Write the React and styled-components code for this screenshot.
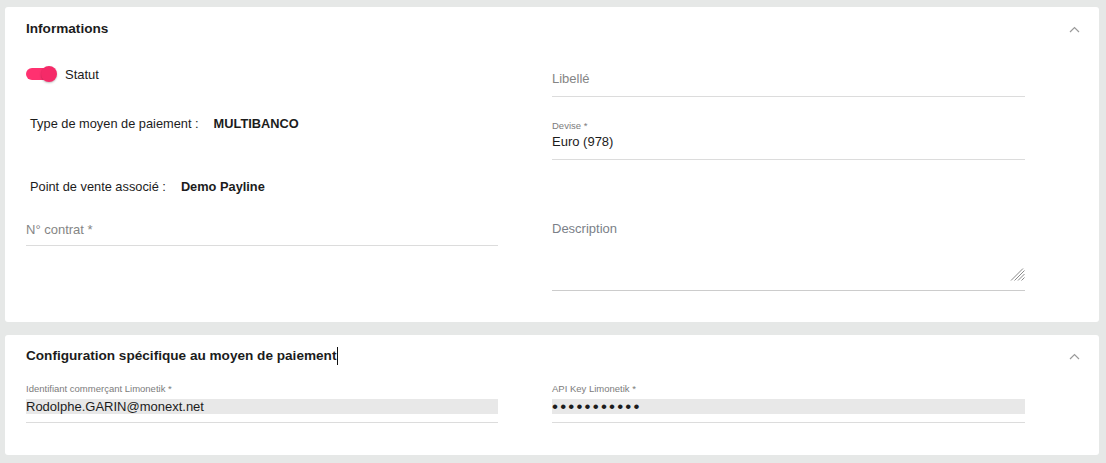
import React from 'react';
import styled, { createGlobalStyle } from 'styled-components';

const GlobalStyle = createGlobalStyle`
    html, body {
        margin: 0;
        padding: 0;
        background: #e6e8e7;
        font-family: "Liberation Sans", Arial, sans-serif;
    }
`;

const Page = styled.div`
    width: 1106px;
    height: 463px;
    box-sizing: border-box;
    padding: 7px 7px 8px 5px;
    display: flex;
    flex-direction: column;
    gap: 13px;
`;

const Card = styled.section`
    background: #fff;
    border-radius: 3px;
    padding: ${p => p.$pad};
`;

const Header = styled.div`
    display: flex;
    justify-content: space-between;
    align-items: center;
    padding-right: 19px;
    height: 16px;
`;

const Title = styled.h3`
    margin: 0;
    font-size: 13.6px;
    line-height: 16px;
    font-weight: bold;
    color: #1c1c1c;
    display: flex;
    align-items: center;
`;

const Caret = styled.span`
    display: inline-block;
    width: 1px;
    height: 18px;
    background: #111;
    margin-left: 1px;
`;

const Grid = styled.div`
    display: grid;
    grid-template-columns: 472px 473px;
    column-gap: 54px;
    margin-top: ${p => p.$top};
    align-items: start;
`;

const Column = styled.div`
    display: flex;
    flex-direction: column;
`;

const ToggleRow = styled.div`
    display: flex;
    align-items: center;
    height: 16px;
    margin-top: ${p => p.$top};
    font-size: 13px;
    color: #1c1c1c;
`;

const Toggle = styled.span`
    position: relative;
    width: 31px;
    height: 16px;
    margin-right: 8px;

    &::before {
        content: '';
        position: absolute;
        left: 0;
        top: 2px;
        width: 27px;
        height: 12px;
        border-radius: 6px;
        background: #ff3170;
    }

    &::after {
        content: '';
        position: absolute;
        left: 15px;
        top: 0;
        width: 16px;
        height: 16px;
        border-radius: 50%;
        background: #f52a68;
        box-shadow: 0 1px 2px rgba(0, 0, 0, 0.25);
    }
`;

const InfoRow = styled.div`
    display: flex;
    padding-left: 4px;
    margin-top: ${p => p.$top};
    font-size: 12.8px;
    line-height: 16px;
    color: #1c1c1c;

    & b {
        margin-left: 15px;
        font-weight: bold;
    }
`;

const Field = styled.label`
    position: relative;
    display: block;
    margin-top: ${p => p.$top};
    padding-bottom: ${p => p.$bottom || '9px'};
    border-bottom: 1px solid ${p => p.$line || '#dcdcdc'};
`;

const SmallLabel = styled.span`
    display: block;
    font-size: 9.5px;
    line-height: 11px;
    color: #7c7c7c;
    margin-bottom: ${p => p.$gap || '3px'};
`;

const Input = styled.input`
    display: block;
    width: 100%;
    box-sizing: border-box;
    border: 0;
    outline: none;
    padding: 0;
    margin: 0;
    height: ${p => p.$h || '16px'};
    line-height: ${p => p.$h || '16px'};
    font-family: "Liberation Sans", Arial, sans-serif;
    font-size: 13px;
    color: #1c1c1c;
    background: ${p => (p.$filled ? '#e8e8e8' : 'transparent')};

    &::placeholder {
        color: #858585;
    }
`;

const Dots = styled.div`
    height: 15px;
    background: #e8e8e8;
    font-size: 17px;
    line-height: 15px;
    letter-spacing: 2.2px;
    color: #1c1c1c;
`;

const TextArea = styled.textarea`
    display: block;
    width: 100%;
    box-sizing: border-box;
    height: 62px;
    border: 0;
    outline: none;
    padding: 0;
    margin: 0;
    resize: none;
    font-family: "Liberation Sans", Arial, sans-serif;
    font-size: 13px;
    line-height: 16px;
    color: #1c1c1c;
    background: transparent;

    &::placeholder {
        color: #7b7f88;
    }
`;

const Grip = styled.svg`
    position: absolute;
    right: 0;
    bottom: 9px;
`;

const Chevron = () => (
    <svg width="11" height="7" viewBox="0 0 11 7">
        <polyline points="1,6 5.5,1.5 10,6" fill="none" stroke="#9a9a9a" strokeWidth="1.2" />
    </svg>
);

const ResizeGrip = () => (
    <Grip width="15" height="15" viewBox="0 0 15 15">
        <g stroke="#8a8a8a" strokeWidth="1">
            <line x1="1" y1="14.5" x2="13" y2="2.5" />
            <line x1="4.5" y1="14.5" x2="14.5" y2="4.5" />
            <line x1="8" y1="14.5" x2="14.5" y2="8" />
            <line x1="11.5" y1="14.5" x2="14.5" y2="11.5" />
        </g>
    </Grip>
);

export default function App() {
    return (
        <Page>
            <GlobalStyle />
            <Card $pad="14px 0 31px 21px">
                <Header>
                    <Title>Informations</Title>
                    <Chevron />
                </Header>
                <Grid $top="23px">
                    <Column>
                        <ToggleRow $top="6px">
                            <Toggle />
                            Statut
                        </ToggleRow>
                        <InfoRow $top="34px">
                            Type de moyen de paiement :<b>MULTIBANCO</b>
                        </InfoRow>
                        <InfoRow $top="47px">
                            Point de vente associé :<b>Demo Payline</b>
                        </InfoRow>
                        <Field $top="27px" $bottom="7px">
                            <Input placeholder="N° contrat *" />
                        </Field>
                    </Column>
                    <Column>
                        <Field $top="11px">
                            <Input placeholder="Libellé" />
                        </Field>
                        <Field $top="23px">
                            <SmallLabel>Devise *</SmallLabel>
                            <Input defaultValue="Euro (978)" readOnly />
                        </Field>
                        <Field $top="61px" $bottom="7px" $line="#cccccc">
                            <TextArea placeholder="Description" />
                            <ResizeGrip />
                        </Field>
                    </Column>
                </Grid>
            </Card>
            <Card $pad="13px 0 32px 21px">
                <Header>
                    <Title>
                        Configuration spécifique au moyen de paiement
                        <Caret />
                    </Title>
                    <Chevron />
                </Header>
                <Grid $top="19px">
                    <Field $bottom="8px">
                        <SmallLabel $gap="5px">Identifiant commerçant Limonetik *</SmallLabel>
                        <Input $filled $h="15px" defaultValue="Rodolphe.GARIN@monext.net" readOnly />
                    </Field>
                    <Field $bottom="8px">
                        <SmallLabel $gap="5px">API Key Limonetik *</SmallLabel>
                        <Dots>•••••••••••</Dots>
                    </Field>
                </Grid>
            </Card>
        </Page>
    );
}
